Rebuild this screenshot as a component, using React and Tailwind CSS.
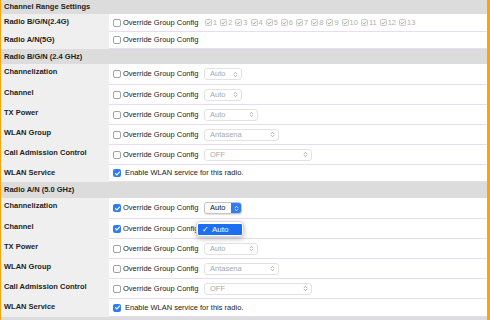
import React from 'react';

function Box({ checked }) {
  if (checked) {
    return (
      <span className="inline-flex h-[8px] w-[8px] shrink-0 items-center justify-center rounded-[2px] bg-[#2f7cf6]">
        <svg viewBox="0 0 8 8" className="h-[7px] w-[7px]">
          <path d="M1.7 4.2 L3.3 5.7 L6.3 2.3" fill="none" stroke="#fff" strokeWidth="1.3" strokeLinecap="round" strokeLinejoin="round" />
        </svg>
      </span>
    );
  }
  return <span className="h-[8px] w-[8px] shrink-0 rounded-[2px] border border-[#a3a3a3] bg-white" />;
}

function UpDown({ color }) {
  return (
    <svg viewBox="0 0 6 9" className="h-[7px] w-[5px]">
      <path d="M1.2 3.6 L3 1.6 L4.8 3.6 M1.2 5.4 L3 7.4 L4.8 5.4" fill="none" stroke={color} strokeWidth="0.9" strokeLinecap="round" strokeLinejoin="round" />
    </svg>
  );
}

function Select({ value, w, active }) {
  if (active) {
    return (
      <div className={`${w} flex h-[12px] items-center justify-between rounded-[3px] border border-[#c4c4c4] bg-white pl-[5px] text-[#111] shadow-[0_1px_1px_rgba(0,0,0,0.12)]`}>
        <span>{value}</span>
        <span className="flex h-full w-[10px] items-center justify-center rounded-r-[2px] bg-[#2f7cf6]">
          <UpDown color="#fff" />
        </span>
      </div>
    );
  }
  return (
    <div className={`${w} flex h-[12px] items-center justify-between rounded-[3px] border border-[#e2e2e2] bg-white pl-[5px] pr-[3px] text-[#a8a8a8]`}>
      <span>{value}</span>
      <UpDown color="#9a9a9a" />
    </div>
  );
}

function Header({ h, children }) {
  return (
    <div className={`flex ${h} items-center bg-[#dcdcdc] pl-[3px] font-bold text-[#222]`}>{children}</div>
  );
}

function Row({ h, label, children, relative }) {
  return (
    <div className={`flex ${h}`}>
      <div className="w-[108px] shrink-0 bg-[#efefef] pl-[3px] pt-[3px] font-bold leading-[10px] text-[#222]">{label}</div>
      <div className={`${relative ? 'relative' : ''} flex flex-1 items-center border-b border-[#e8dcf4] pl-[4px]`}>{children}</div>
    </div>
  );
}

function Override({ checked }) {
  return (
    <div className="flex w-[91px] shrink-0 items-center gap-[2px]">
      <Box checked={checked} />
      <span className="whitespace-nowrap text-[#222]">Override Group Config</span>
    </div>
  );
}

function Enable() {
  return (
    <div className="flex items-center gap-[4px]">
      <Box checked />
      <span className="whitespace-nowrap text-[#222]">Enable WLAN service for this radio.</span>
    </div>
  );
}

function ChannelRange() {
  const nums = [1, 2, 3, 4, 5, 6, 7, 8, 9, 10, 11, 12, 13];
  return (
    <div className="ml-[1px] flex items-center">
      {nums.map((n) => (
        <div key={n} className="mr-[3px] flex items-center">
          <span className="flex h-[7px] w-[7px] items-center justify-center rounded-[1.5px] border border-[#c8c8c8] bg-[#f6f6f6]">
            <svg viewBox="0 0 7 7" className="h-[6px] w-[6px]">
              <path d="M1.4 3.6 L2.9 5 L5.6 1.9" fill="none" stroke="#8a8a8a" strokeWidth="0.9" strokeLinecap="round" strokeLinejoin="round" />
            </svg>
          </span>
          <span className="ml-[1px] text-[#b0b0b0]">{n}</span>
        </div>
      ))}
    </div>
  );
}

export default function App() {
  return (
    <div className="h-[320px] w-[490px] overflow-hidden border-l border-r-[3px] border-l-[#ffa500] border-r-[#ffa500] bg-white font-['Liberation_Sans',Arial,sans-serif] text-[7.5px] leading-[10px]">
      <Header h="h-[14px]">Channel Range Settings</Header>
      <Row h="h-[18px]" label="Radio B/G/N(2.4G)">
        <Override />
        <ChannelRange />
      </Row>
      <Row h="h-[17px]" label="Radio A/N(5G)">
        <Override />
      </Row>

      <Header h="h-[15px]">Radio B/G/N (2.4 GHz)</Header>
      <Row h="h-[21px]" label="Channelization">
        <Override />
        <Select value="Auto" w="w-[38px]" />
      </Row>
      <Row h="h-[20px]" label="Channel">
        <Override />
        <Select value="Auto" w="w-[38px]" />
      </Row>
      <Row h="h-[20px]" label="TX Power">
        <Override />
        <Select value="Auto" w="w-[54px]" />
      </Row>
      <Row h="h-[20px]" label="WLAN Group">
        <Override />
        <Select value="Antasena" w="w-[75px]" />
      </Row>
      <Row h="h-[20px]" label="Call Admission Control">
        <Override />
        <Select value="OFF" w="w-[108px]" />
      </Row>
      <Row h="h-[17px]" label="WLAN Service">
        <Enable />
      </Row>

      <Header h="h-[16px]">Radio A/N (5.0 GHz)</Header>
      <Row h="h-[21px]" label="Channelization">
        <Override checked />
        <Select value="Auto" w="w-[38px]" active />
      </Row>
      <Row h="h-[20px]" label="Channel" relative>
        <Override checked />
        <div className="absolute left-[87px] top-[2px] flex h-[16px] w-[48px] flex-col rounded-[4px] border border-[#d8d8d8] bg-white px-[1px] pt-[2px] shadow-[0_2px_5px_rgba(0,0,0,0.25)]">
          <div className="flex h-[11px] items-center rounded-[1px] bg-[#1d6ff2] pl-[4px] text-[8px] text-white">
            <span className="w-[10px]">✓</span>
            <span>Auto</span>
          </div>
        </div>
      </Row>
      <Row h="h-[20px]" label="TX Power">
        <Override />
        <Select value="Auto" w="w-[54px]" />
      </Row>
      <Row h="h-[20px]" label="WLAN Group">
        <Override />
        <Select value="Antasena" w="w-[75px]" />
      </Row>
      <Row h="h-[20px]" label="Call Admission Control">
        <Override />
        <Select value="OFF" w="w-[108px]" />
      </Row>
      <Row h="h-[18px]" label="WLAN Service">
        <Enable />
      </Row>
      <Header h="h-[10px]"> </Header>
    </div>
  );
}
